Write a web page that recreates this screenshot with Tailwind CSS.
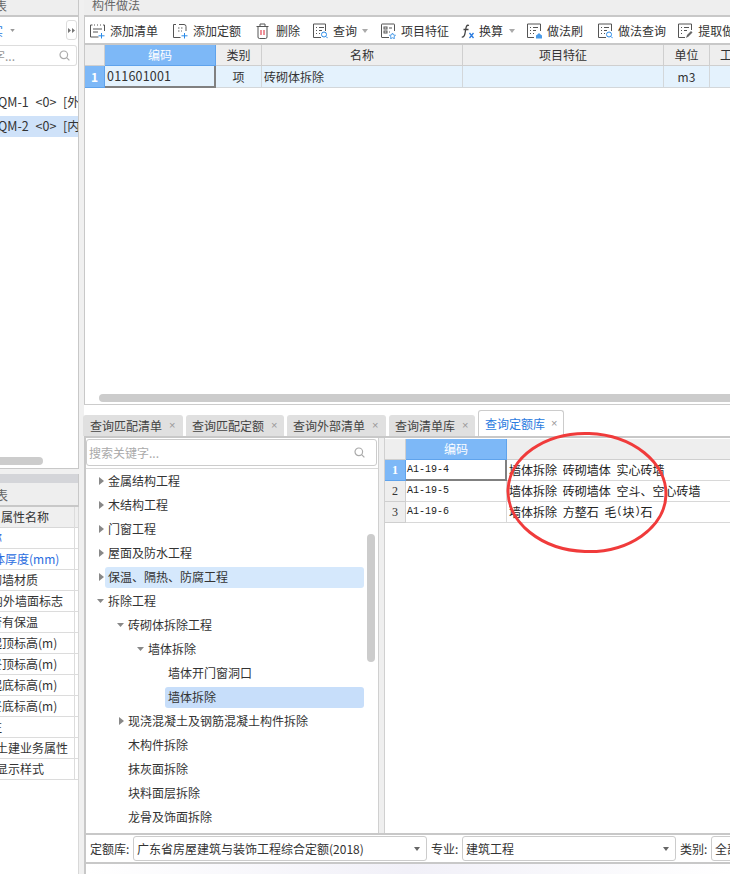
<!DOCTYPE html>
<html lang="zh">
<head>
<meta charset="utf-8">
<script src="https://cdn.jsdelivr.net/npm/@tailwindcss/browser@4"></script>
</head>
<body class="m-0 bg-white">
<div class="relative flex w-[730px] h-[874px] overflow-hidden bg-white text-[12px] leading-none text-[#333] font-['Noto_Sans_CJK_SC','Noto_Sans',sans-serif]">

  <!-- left column -->
  <div class="flex flex-col w-[84px] shrink-0 bg-[#f0f0f0]">
    <div class="w-[79px] h-[469px] bg-white border-r border-b border-[#c8c8c8] flex flex-col overflow-hidden shrink-0">
      <div class="h-[17px] bg-[#eeeeee] border-b-2 border-[#c8c8c8] flex items-center text-[#666] shrink-0"><span class="-ml-[5px] -mt-[4px]">表</span></div>
      <div class="h-[27px] flex items-center shrink-0">
        <span class="text-[#2a7be0] -ml-[9px]">实</span>
        <svg width="5" height="3" viewBox="0 0 6 4" class="ml-[7px] shrink-0"><path d="M0 0h6L3 4z" fill="#999"/></svg>
      </div>
      <div class="absolute left-[66px] top-[20px] w-[11px] h-[20px] rounded-[3px] border border-[#ddd] flex items-center justify-center text-[#666]"><svg width="7" height="5" viewBox="0 0 7 5"><path d="M0 0l3 2.500-3 2.500zM4 0l3 2.500-3 2.500z" fill="#777"/></svg></div>
      <div class="h-[21px] mt-[1px] mr-[1px] rounded-r-[3px] border border-l-0 border-[#ddd] flex items-center justify-between pr-[6px] text-[#999] shrink-0">
        <span class="-ml-[7px]">字...</span>
        <svg width="11" height="11" viewBox="0 0 11 11" fill="none" stroke="#aaa" stroke-width="1.200"><circle cx="4.800" cy="4.800" r="3.800"/><path d="M7.600 7.600l2.800 2.800"/></svg>
      </div>
      <div class="flex flex-col mt-[26px] whitespace-nowrap [word-spacing:4px]">
        <div class="h-[21px] flex items-center"><span class="-ml-[2px] text-[12.500px]">QM-1 &lt;0&gt; [外墙]</span></div>
        <div class="h-[21px] flex items-center bg-[#cfe2f9] mt-[3px]"><span class="-ml-[2px] text-[12.500px]">QM-2 &lt;0&gt; [内墙]</span></div>
      </div>
      <div class="mt-auto mb-[3px] w-[43px] h-[8px] bg-[#cccccc] rounded-r-full"></div>
    </div>
    <div class="mt-[5px] w-[79px] h-[9px] bg-[#d4d5d9] border-r border-[#c8c8c8] shrink-0"></div>
    <div class="w-[79px] h-[24px] bg-[#eeeeee] border-r border-b-2 border-[#c8c8c8] flex items-center text-[#666] shrink-0"><span class="-ml-[5px] text-[13px]">表</span></div>
    <div class="relative w-[79px] flex flex-col bg-white border-r border-[#d8d8d8] whitespace-nowrap overflow-hidden shrink-0">
      <div class="h-[21px] flex items-center bg-[#efefef] border-b border-[#d8d8d8] pl-[1px] shrink-0"><span>属性名称</span></div>
      <div class="h-[21px] flex items-center border-b border-[#dcdcdc] text-[#2a6de0] shrink-0"><span class="-ml-[10px]">称</span></div>
      <div class="h-[21px] flex items-center border-b border-[#dcdcdc] text-[#2a6de0] shrink-0"><span class="-ml-[7px]">体厚度(mm)</span></div>
      <div class="h-[21px] flex items-center border-b border-[#dcdcdc] shrink-0"><span class="-ml-[10px]">砌墙材质</span></div>
      <div class="h-[21px] flex items-center border-b border-[#dcdcdc] shrink-0"><span class="-ml-[9px]">内外墙面标志</span></div>
      <div class="h-[21px] flex items-center border-b border-[#dcdcdc] shrink-0"><span class="-ml-[10px]">否有保温</span></div>
      <div class="h-[21px] flex items-center border-b border-[#dcdcdc] shrink-0"><span class="-ml-[10px]">起顶标高(m)</span></div>
      <div class="h-[21px] flex items-center border-b border-[#dcdcdc] shrink-0"><span class="-ml-[10px]">终顶标高(m)</span></div>
      <div class="h-[21px] flex items-center border-b border-[#dcdcdc] shrink-0"><span class="-ml-[10px]">起底标高(m)</span></div>
      <div class="h-[21px] flex items-center border-b border-[#dcdcdc] shrink-0"><span class="-ml-[10px]">终底标高(m)</span></div>
      <div class="h-[21px] flex items-center border-b border-[#dcdcdc] shrink-0"><span class="-ml-[10px]">注</span></div>
      <div class="h-[21px] flex items-center border-b border-[#dcdcdc] shrink-0"><span class="-ml-[4px]">土建业务属性</span></div>
      <div class="h-[21px] flex items-center border-b border-[#dcdcdc] shrink-0"><span class="-ml-[4px]">显示样式</span></div>
      <span class="absolute right-[3px] top-0 bottom-0 w-px bg-[#dcdcdc]"></span>
    </div>
    <div class="flex-1 w-[79px] bg-white border-r border-[#d8d8d8]"></div>
  </div>

  <!-- right column -->
  <div class="flex flex-col flex-1 min-w-0 bg-white">
    <div class="h-[17px] shrink-0 bg-[#eeeeee] border-b-2 border-[#c8c8c8] pl-[8px] flex items-center text-[#666]"><span class="-mt-[6px]">构件做法</span></div>

    <!-- toolbar -->
    <div class="h-[26px] shrink-0 flex items-center pl-[6px] pt-[2px] whitespace-nowrap overflow-hidden border-l border-[#c8c8c8]">
      <span class="shrink-0 flex items-center gap-[5px] -ml-[1px]"><svg class="shrink-0" width="15" height="16" viewBox="0 0 15 16" fill="none" stroke="#555"><path d="M2.500 2h-2v12h8M4 2h1M7 2h1M10 2h1M13 2h1.500v6M3 6h9M3 9h5"/><path d="M11.500 10v5.500M8.500 12.800h6" stroke="#2a8be8"/></svg><span>添加清单</span></span>
      <span class="shrink-0 flex items-center gap-[5px] ml-[15px]"><svg class="shrink-0" width="15" height="16" viewBox="0 0 15 16" fill="none" stroke="#555"><path d="M3 1.500H.5v13h7M13 8V3.500a2 2 0 0 0-2-2H6"/><path d="M5 5h1.500M8 5h1.500M5 8h1.500M8 8h1" stroke="#666"/><path d="M11.500 10v5.500M8.500 12.800h6" stroke="#2a8be8"/></svg><span>添加定额</span></span>
      <span class="shrink-0 flex items-center gap-[7px] ml-[15px]"><svg class="shrink-0" width="13" height="16" viewBox="0 0 13 16" fill="none" stroke="#555"><path d="M.5 3.500h12M4 3.500V1h5v2.500M2 3.500v10.500a1.500 1.500 0 0 0 1.500 1.500h6A1.500 1.500 0 0 0 11 14V3.500"/><path d="M5 7v5M8 7v5" stroke="#d23"/></svg><span>删除</span></span>
      <span class="shrink-0 flex items-center gap-[5px] ml-[13px]"><svg class="shrink-0" width="15" height="16" viewBox="0 0 15 16" fill="none" stroke="#555"><path d="M8 14.500H.5V1h12v7M3 4.500h1M6 4.500h5M3 7.500h1M6 7.500h3M3 10.500h1M6 10.500h1"/><circle cx="11" cy="11.500" r="2.500" stroke="#2a8be8"/><path d="M13 13.500l1.700 1.700" stroke="#2a8be8"/></svg><span>查询</span></span>
      <svg width="6" height="4" viewBox="0 0 6 4" class="shrink-0 ml-[5px]"><path d="M0 0h6L3 4z" fill="#aaa"/></svg>
      <span class="shrink-0 flex items-center gap-[5px] ml-[13px]"><svg class="shrink-0" width="15" height="16" viewBox="0 0 15 16" fill="none" stroke="#555"><path d="M8 14.500H1a.5.500 0 0 1-.5-.5V1.500A.5.500 0 0 1 1 1h12a.5.500 0 0 1 .5.500V8"/><rect x="3" y="4" width="3" height="2"/><rect x="3" y="8" width="3" height="2"/><path d="M8 5h3M8 9h1"/><path d="M11.500 10l1 2 2 .3-1.500 1.400.4 2-1.900-1-1.900 1 .4-2-1.500-1.400 2-.3z" stroke="#4a9be8" fill="#fff"/></svg><span>项目特征</span></span>
      <span class="shrink-0 flex items-center gap-[4px] ml-[12px]"><svg class="shrink-0" width="14" height="15" viewBox="0 0 14 15" fill="none"><path d="M8 1.500C5.500 .5 5 3 4.500 6.500 4 10 3.500 13.500 .8 13M2.500 5.500h5" stroke="#444" stroke-width="1.300"/><path d="M8.500 9l4 5M12.500 9l-4 5" stroke="#2a7be0" stroke-width="1.300"/></svg><span>换算</span></span>
      <svg width="6" height="4" viewBox="0 0 6 4" class="shrink-0 ml-[6px]"><path d="M0 0h6L3 4z" fill="#aaa"/></svg>
      <span class="shrink-0 flex items-center gap-[5px] ml-[12px]"><svg class="shrink-0" width="15" height="16" viewBox="0 0 15 16" fill="none" stroke="#555"><path d="M7 14.500H.5V1h13v7M3 4.500h1M6 4.500h5M3 7.500h1M6 7.500h3M3 10.500h1M6 10.500h1"/><path d="M9 15.500v-3l2-1.500 1-1 1 1 2 1.500v3z" fill="#4a9be8" stroke="none"/></svg><span>做法刷</span></span>
      <span class="shrink-0 flex items-center gap-[5px] ml-[15px]"><svg class="shrink-0" width="15" height="16" viewBox="0 0 15 16" fill="none" stroke="#555"><path d="M8 14.500H.5V1h13v7M3 4.500h1M6 4.500h5M3 7.500h1M6 7.500h3M3 10.500h1M6 10.500h1"/><circle cx="11" cy="11.500" r="2.500" stroke="#2a8be8"/><path d="M13 13.500l1.700 1.700" stroke="#2a8be8"/></svg><span>做法查询</span></span>
      <span class="shrink-0 flex items-center gap-[5px] ml-[12px]"><svg class="shrink-0" width="15" height="16" viewBox="0 0 15 16" fill="none" stroke="#555"><path d="M7 14.500H.5V1h13v6M3 4.500h1M6 4.500h5M3 7.500h1M6 7.500h3M3 10.500h1"/><path d="M8 15l1-3 4-4 1.500 1.500-4 4z" fill="#666" stroke="none"/></svg><span>提取做法</span></span>
    </div>

    <!-- upper table -->
    <div class="relative h-[362px] shrink-0 border-t-2 border-[#c8c8c8] border-l border-b border-l-[#c8c8c8] border-b-[#cccccc] overflow-hidden">
      <div class="grid grid-cols-[20px_111px_46px_201px_201px_46px_56px] grid-rows-[21px_22px]">
        <div class="bg-[#eeeeee] border-r border-b border-[#cfcfcf]"></div>
        <div class="bg-[#7db8f7] border-r border-b border-[#5fa3ec] text-white flex items-center justify-center">编码</div>
        <div class="bg-[#eeeeee] border-r border-b border-[#cfcfcf] flex items-center justify-center">类别</div>
        <div class="bg-[#eeeeee] border-r border-b border-[#cfcfcf] flex items-center justify-center">名称</div>
        <div class="bg-[#eeeeee] border-r border-b border-[#cfcfcf] flex items-center justify-center">项目特征</div>
        <div class="bg-[#eeeeee] border-r border-b border-[#cfcfcf] flex items-center justify-center">单位</div>
        <div class="bg-[#eeeeee] border-b border-[#cfcfcf] flex items-center justify-center whitespace-nowrap">工程量</div>
        <div class="bg-[#7db8f7] border-r border-b border-[#5fa3ec] text-white font-bold flex items-center justify-center">1</div>
        <div class="bg-[#e4f2fd] border-r-2 border-b-2 border-[#808080] flex items-center pl-[2px] text-[12.500px] tracking-[0.200px]">011601001</div>
        <div class="bg-[#e4f2fd] border-r border-b border-[#d3d7da] flex items-center justify-center">项</div>
        <div class="bg-[#e4f2fd] border-r border-b border-[#d3d7da] flex items-center pl-[2px]">砖砌体拆除</div>
        <div class="bg-[#e4f2fd] border-r border-b border-[#d3d7da]"></div>
        <div class="bg-[#e4f2fd] border-r border-b border-[#d3d7da] flex items-center justify-center">m3</div>
        <div class="bg-[#e4f2fd] border-b border-[#d3d7da]"></div>
      </div>
      <div class="absolute left-[14px] right-0 bottom-[2px] h-[8px] rounded-l-full bg-[#cccccc]"></div>
    </div>

    <!-- tabs -->
    <div class="h-[31px] shrink-0 flex items-end whitespace-nowrap -ml-[1px] gap-[3px]">
      <div class="w-[100px] h-[21px] bg-[#e0e0e0] rounded-t-[3px] flex items-center pl-[7px] text-[#444]">查询匹配清单<span class="ml-[7px] text-[#999] text-[11px] font-['Liberation_Sans',sans-serif]">×</span></div>
      <div class="w-[98px] h-[21px] bg-[#e0e0e0] rounded-t-[3px] flex items-center pl-[6px] text-[#444]">查询匹配定额<span class="ml-[7px] text-[#999] text-[11px] font-['Liberation_Sans',sans-serif]">×</span></div>
      <div class="w-[99px] h-[21px] bg-[#e0e0e0] rounded-t-[3px] flex items-center pl-[6px] text-[#444]">查询外部清单<span class="ml-[7px] text-[#999] text-[11px] font-['Liberation_Sans',sans-serif]">×</span></div>
      <div class="w-[86px] h-[21px] bg-[#e0e0e0] rounded-t-[3px] flex items-center pl-[6px] text-[#444]">查询清单库<span class="ml-[7px] text-[#999] text-[11px] font-['Liberation_Sans',sans-serif]">×</span></div>
      <div class="w-[86px] h-[26px] bg-white border border-b-0 border-[#cccccc] rounded-t-[3px] flex items-center pl-[6px] text-[#2a7be0]">查询定额库<span class="ml-[6px] text-[#999] text-[11px] font-['Liberation_Sans',sans-serif]">×</span></div>
    </div>

    <!-- lower panel -->
    <div class="flex-1 min-h-0 flex flex-col border-t-2 border-[#c8c8c8] border-l-2 border-l-[#c8c8c8]">
      <div class="h-[395px] shrink-0 flex min-h-0">
        <!-- tree pane -->
        <div class="relative w-[292px] shrink-0 flex flex-col">
          <div class="h-[27px] mt-[1px] mr-[1px] shrink-0 rounded-[3px] border border-[#cccccc] flex items-center justify-between pl-[2px] pr-[11px] text-[#aaa]">
            <span>搜索关键字...</span>
            <svg width="11" height="11" viewBox="0 0 11 11" fill="none" stroke="#aaa" stroke-width="1.200"><circle cx="4.800" cy="4.800" r="3.800"/><path d="M7.600 7.600l2.800 2.800"/></svg>
          </div>
          <div class="border-t border-[#d8d8d8] mt-[2px] flex flex-col whitespace-nowrap">
            <div class="h-6 flex items-center pl-[13px]"><svg width="5" height="8" viewBox="0 0 5 8" class="mr-[1px] shrink-0"><path d="M0 0l5 4-5 4z" fill="#888"/></svg><span class="pl-[3px]">金属结构工程</span></div>
            <div class="h-6 flex items-center pl-[13px]"><svg width="5" height="8" viewBox="0 0 5 8" class="mr-[1px] shrink-0"><path d="M0 0l5 4-5 4z" fill="#888"/></svg><span class="pl-[3px]">木结构工程</span></div>
            <div class="h-6 flex items-center pl-[13px]"><svg width="5" height="8" viewBox="0 0 5 8" class="mr-[1px] shrink-0"><path d="M0 0l5 4-5 4z" fill="#888"/></svg><span class="pl-[3px]">门窗工程</span></div>
            <div class="h-6 flex items-center pl-[13px]"><svg width="5" height="8" viewBox="0 0 5 8" class="mr-[1px] shrink-0"><path d="M0 0l5 4-5 4z" fill="#888"/></svg><span class="pl-[3px]">屋面及防水工程</span></div>
            <div class="h-6 flex items-center pl-[13px]"><svg width="5" height="8" viewBox="0 0 5 8" class="mr-[1px] shrink-0"><path d="M0 0l5 4-5 4z" fill="#888"/></svg><span class="flex-1 h-[21px] flex items-center pl-[3px] mr-[14px] bg-[#d5e8fc] rounded-[3px]">保温、隔热、防腐工程</span></div>
            <div class="h-6 flex items-center pl-[11px]"><svg width="7" height="4" viewBox="0 0 7 4" class="mr-[1px] shrink-0"><path d="M0 0h7L3.500 4z" fill="#888"/></svg><span class="pl-[3px]">拆除工程</span></div>
            <div class="h-6 flex items-center pl-[31px]"><svg width="7" height="4" viewBox="0 0 7 4" class="mr-[1px] shrink-0"><path d="M0 0h7L3.500 4z" fill="#888"/></svg><span class="pl-[3px]">砖砌体拆除工程</span></div>
            <div class="h-6 flex items-center pl-[51px]"><svg width="7" height="4" viewBox="0 0 7 4" class="mr-[1px] shrink-0"><path d="M0 0h7L3.500 4z" fill="#888"/></svg><span class="pl-[3px]">墙体拆除</span></div>
            <div class="h-6 flex items-center pl-[82px]">墙体开门窗洞口</div>
            <div class="h-6 flex items-center pl-[79px]"><span class="flex-1 h-[21px] flex items-center pl-[3px] mr-[14px] bg-[#c7defa] rounded-[3px]">墙体拆除</span></div>
            <div class="h-6 flex items-center pl-[33px]"><svg width="5" height="8" viewBox="0 0 5 8" class="mr-[1px] shrink-0"><path d="M0 0l5 4-5 4z" fill="#888"/></svg><span class="pl-[3px]">现浇混凝土及钢筋混凝土构件拆除</span></div>
            <div class="h-6 flex items-center pl-[42px]">木构件拆除</div>
            <div class="h-6 flex items-center pl-[42px]">抹灰面拆除</div>
            <div class="h-6 flex items-center pl-[42px]">块料面层拆除</div>
            <div class="h-6 flex items-center pl-[42px]">龙骨及饰面拆除</div>
          </div>
          <div class="absolute right-[3px] top-[96px] w-[8px] h-[128px] rounded-full bg-[#cccccc]"></div>
        </div>
        <!-- divider -->
        <div class="w-[7px] shrink-0 bg-[#efefef] border-l border-r border-[#d0d0d0]"></div>
        <!-- quota table -->
        <div class="flex-1 min-w-0">
          <div class="grid grid-cols-[21px_101px_1fr] grid-rows-[21px_21px_21px_21px] mt-[1px]">
            <div class="bg-[#eeeeee] border-r border-b border-[#cfcfcf]"></div>
            <div class="bg-[#7db8f7] border-r border-b border-[#5fa3ec] text-white flex items-center justify-center">编码</div>
            <div class="bg-[#eeeeee] border-b border-[#cfcfcf]"></div>
            <div class="bg-[#7db8f7] border-r border-b border-[#5fa3ec] text-white font-bold flex items-center justify-center font-['Liberation_Serif',serif]">1</div>
            <div class="border-r-2 border-b-2 border-[#808080] flex items-center pl-[1px] font-['Liberation_Mono',monospace] text-[10px] text-[#222]">A1-19-4</div>
            <div class="border-b border-[#d8d8d8] flex items-center pl-[2px] text-[#222] whitespace-nowrap [word-spacing:3px]">墙体拆除 砖砌墙体 实心砖墙</div>
            <div class="bg-[#eeeeee] border-r border-b border-[#cfcfcf] flex items-center justify-center font-['Liberation_Serif',serif]">2</div>
            <div class="border-r border-b border-[#d8d8d8] flex items-center pl-[1px] font-['Liberation_Mono',monospace] text-[10px] text-[#222]">A1-19-5</div>
            <div class="border-b border-[#d8d8d8] flex items-center pl-[2px] text-[#222] whitespace-nowrap [word-spacing:3px]">墙体拆除 砖砌墙体 空斗、空心砖墙</div>
            <div class="bg-[#eeeeee] border-r border-b border-[#cfcfcf] flex items-center justify-center font-['Liberation_Serif',serif]">3</div>
            <div class="border-r border-b border-[#d8d8d8] flex items-center pl-[1px] font-['Liberation_Mono',monospace] text-[10px] text-[#222]">A1-19-6</div>
            <div class="border-b border-[#d8d8d8] flex items-center pl-[2px] text-[#222] whitespace-pre [word-spacing:3px]">墙体拆除 方整石 毛<span class="font-['Liberation_Mono',monospace] text-[10px]">(</span>块<span class="font-['Liberation_Mono',monospace] text-[10px]">)</span>石</div>
          </div>
        </div>
      </div>

      <!-- filter bar -->
      <div class="h-[31px] shrink-0 border-t-2 border-b-2 border-[#c8c8c8] flex items-center whitespace-nowrap overflow-hidden pl-[4px]">
        <span class="w-[43px] shrink-0">定额库:</span>
        <div class="w-[294px] h-[25px] shrink-0 rounded-[3px] border border-[#cccccc] flex items-center justify-between pl-[3px] pr-[6px]"><span>广东省房屋建筑与装饰工程综合定额(2018)</span><svg class="shrink-0" width="6" height="4" viewBox="0 0 6 4"><path d="M0 0h6L3 4z" fill="#666"/></svg></div>
        <span class="w-[27px] ml-[4px] shrink-0">专业:</span>
        <div class="ml-[4px] w-[214px] h-[25px] shrink-0 rounded-[3px] border border-[#cccccc] flex items-center justify-between pl-[3px] pr-[6px]"><span>建筑工程</span><svg class="shrink-0" width="6" height="4" viewBox="0 0 6 4"><path d="M0 0h6L3 4z" fill="#666"/></svg></div>
        <span class="w-[28px] ml-[4px] shrink-0">类别:</span>
        <div class="ml-[3px] w-[60px] h-[25px] shrink-0 rounded-[3px] border border-[#cccccc] flex items-center pl-[3px]"><span>全部</span></div>
      </div>
      <div class="flex-1 bg-gradient-to-r from-white via-[#f1f0f8] to-white"></div>
    </div>
  </div>

  <!-- red hand-drawn circle -->
  <svg class="absolute left-[500px] top-[425px]" width="175" height="135" viewBox="0 0 175 135" fill="none"><ellipse cx="87" cy="67.500" rx="79" ry="59" stroke="#f03b3b" stroke-width="3" transform="rotate(2 87 67.500)"/></svg>
</div>
</body>
</html>
